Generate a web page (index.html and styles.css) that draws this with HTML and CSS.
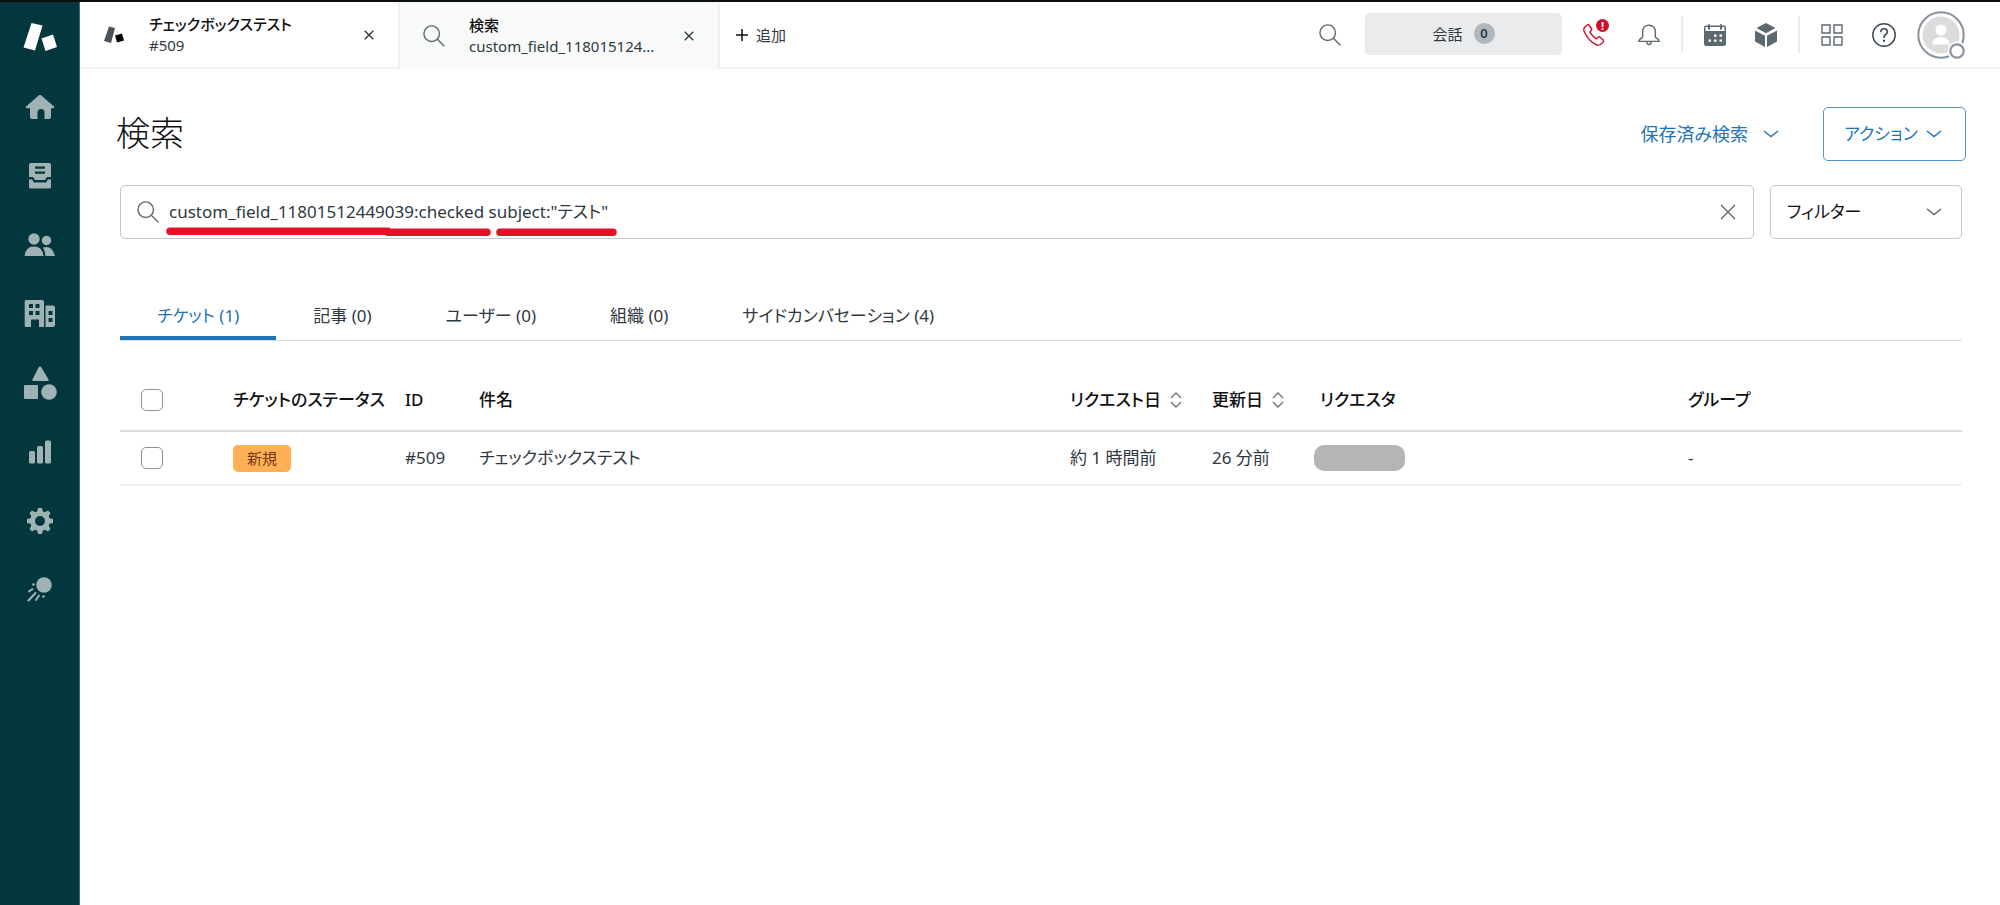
FILE: index.html
```html
<!DOCTYPE html>
<html lang="ja">
<head>
<meta charset="utf-8">
<meta name="viewport" content="width=device-width, initial-scale=1">
<title>検索</title>
<link rel="stylesheet" href="styles.css">
</head>
<body>
<div class="app">
  <nav class="sidebar" aria-label="メイン">
    <a class="side-link side-logo" href="#" aria-label="ホームページ"><svg width="36" height="30" viewBox="0 0 36 30" fill="#fff"><path d="M9.500 1l11 2.500-7.500 25L1.500 25.500zM19.500 16.500l11.500-4 4 12.500-11.500 4z"/></svg></a>
    <a class="side-link" href="#" aria-label="ホーム"><svg width="30" height="26" viewBox="0 0 30 26"><path d="M14 1.200q1-.9 2 0L29 12.500q1 1.500-.6 1.700H26V23q0 2-2 2h-4.500v-6.500a3.500 3.500 0 0 0-7 0V25H7q-2 0-2-2v-8.800H1.600Q0 14 1 12.500z"/></svg></a>
    <a class="side-link" href="#" aria-label="ビュー"><svg width="24" height="26" viewBox="0 0 24 26"><path fill-rule="evenodd" d="M3 0h18q2 0 2 2v12h-4l-2 3H7l-2-3H1V2q0-2 2-2zm4 3.500v2.200h10V3.500zM7 8.500v2.200h10V8.500z"/><path d="M1 16.500h3l2 3h12l2-3h3V24q0 1.500-1.500 1.500h-19Q1 25.500 1 24z"/></svg></a>
    <a class="side-link" href="#" aria-label="顧客"><svg width="32" height="24" viewBox="0 0 32 24"><circle cx="10" cy="6" r="5.700"/><circle cx="22.500" cy="7.500" r="4.700"/><path d="M.5 23q1-9.500 9.500-9.500T19.500 23zM19 14.500q9-3 12 8.500h-9.500q-.3-5-2.500-8.500z"/></svg></a>
    <a class="side-link" href="#" aria-label="組織"><svg width="32" height="28" viewBox="0 0 32 28"><path fill-rule="evenodd" d="M2 0h16q2 0 2 2v25h-5v-6.500q0-1-1-1H8q-1 0-1 1V27H2q-1.300 0-1.300-1.300V1.500Q.7 0 2 0zm3 4v4h4V4zm6.500 0v4h4V4zM5 11v4h4v-4zm6.500 0v4h4v-4zM21.500 5.500H29q2 0 2 2V25q0 2-2 2h-7.500zM24.500 11v4h4v-4zm0 7v4h4v-4z"/></svg></a>
    <a class="side-link" href="#" aria-label="オブジェクト"><svg width="34" height="34" viewBox="0 0 34 34"><path d="M15.500 1.500q1.500-2 3 0l7 12q.7 1.500-1 1.500h-14q-1.700 0-1-1.500z"/><rect x="1" y="19" width="14" height="14" rx="1"/><circle cx="26" cy="26" r="7.800"/></svg></a>
    <a class="side-link" href="#" aria-label="レポート"><svg width="24" height="24" viewBox="0 0 24 24"><rect x="1" y="11" width="6" height="12.500" rx="1.500"/><rect x="9" y="6" width="6" height="17.500" rx="1.500"/><rect x="17" y=".5" width="6" height="23" rx="1.500"/></svg></a>
    <a class="side-link" href="#" aria-label="管理"><svg width="26" height="26" viewBox="0 0 26 26"><path fill-rule="evenodd" d="M11 0h4l.8 3.500 2 .8L21 2.500 23.500 5l-1.800 3.200.8 2 3.500.8v4l-3.500.8-.8 2 1.800 3.200-2.500 2.500-3.200-1.800-2 .8L15 26h-4l-.8-3.500-2-.8L5 23.500 2.500 21l1.800-3.200-.8-2L0 15v-4l3.500-.8.800-2L2.500 5 5 2.500l3.200 1.800 2-.8zM13 8a5 5 0 1 0 0 10 5 5 0 0 0 0-10z"/></svg></a>
    <a class="side-link" href="#" aria-label="アプリ"><svg width="26" height="26" viewBox="0 0 26 26"><circle cx="17" cy="8" r="7.800"/><path d="M1.500 23.500l7-7.500M2 14.500l3.500-2.500M9 23l3-4.500" fill="none" stroke="#9fb3b5" stroke-width="2" stroke-linecap="round"/><circle cx="6.500" cy="7.500" r="1.300"/><circle cx="16.500" cy="19.500" r="1.300"/></svg></a>
  </nav>

  <div class="workspace">
    <header class="topbar">
      <div class="doc-tab">
        <svg class="doc-icon" width="22" height="18" viewBox="0 0 22 18"><path fill="#49545c" d="M6 .5l6 1.500-4 15-7-2z"/><path d="M12 9.500l7-2 2 7-7 2z"/></svg>
        <a class="doc-text" href="#"><span class="doc-title">チェックボックステスト</span><span class="doc-sub">#509</span></a>
        <button class="icon-btn" aria-label="閉じる"><svg width="10" height="10" viewBox="0 0 10 10"><path d="M.7.700l8.600 8.600M9.300.700L.7 9.300" stroke="#2f3941" stroke-width="1.400"/></svg></button>
      </div>
      <div class="doc-tab doc-tab-active">
        <svg class="doc-icon" width="22" height="22" viewBox="0 0 22 22" fill="none" stroke="#5c6970" stroke-width="1.400"><circle cx="8.700" cy="8.700" r="7.800"/><path d="M14.300 14.300l7 7"/></svg>
        <a class="doc-text" href="#"><span class="doc-title">検索</span><span class="doc-sub">custom_field_118015124...</span></a>
        <button class="icon-btn" aria-label="閉じる"><svg width="10" height="10" viewBox="0 0 10 10"><path d="M.7.700l8.600 8.600M9.300.700L.7 9.300" stroke="#2f3941" stroke-width="1.400"/></svg></button>
      </div>
      <button class="add-btn"><svg width="12" height="12" viewBox="0 0 12 12"><path d="M6 0v12M0 6h12" stroke="#111" stroke-width="1.500"/></svg>追加</button>

      <div class="tools">
        <button class="icon-btn" aria-label="検索"><svg width="22" height="22" viewBox="0 0 22 22" fill="none" stroke="#5c6970" stroke-width="1.400"><circle cx="8.700" cy="8.700" r="7.800"/><path d="M14.300 14.300l7 7"/></svg></button>
        <button class="talk-btn">会話<span class="count">0</span></button>
        <div class="tool-group">
          <button class="icon-btn phone-btn" aria-label="通話"><svg width="26" height="22" viewBox="0 0 26 22" fill="none" stroke="#cc0f2c" stroke-width="1.400" stroke-linejoin="round"><path d="M4.200.9L1.600 3.300Q.2 5 1.300 7.700q3.700 8.400 11.200 12.600 3 1.600 4.900.2l2.800-2.600q.8-1 0-2l-3-2.700q-1-.8-2 0l-1.900 1.600Q9 12 6.800 8.200l1.400-1.700q.9-1 .2-2L6.200 1.300q-1-1.100-2-.4z"/></svg><span class="alert">!</span></button>
          <button class="icon-btn" aria-label="通知"><svg width="22" height="22" viewBox="0 0 22 22" fill="none" stroke="#5c6970" stroke-width="1.400"><path d="M11 1.200c-4 0-6.300 2.800-6.300 6.300v4.800q0 1-.8 1.600l-2 1.500q-1 .8-1 2h20.200q0-1.200-1-2l-2-1.500q-.8-.6-.8-1.600V7.500c0-3.500-2.300-6.300-6.300-6.300zM8.700 17.500q0 3 2.300 3t2.300-3"/></svg></button>
        </div>
        <span class="divider"></span>
        <div class="tool-group">
          <button class="icon-btn" aria-label="カレンダー"><svg width="22" height="24" viewBox="0 0 22 24" fill="#5c6970"><path d="M5 1v5M17 1v5" stroke="#5c6970" stroke-width="1.500"/><path fill-rule="evenodd" d="M2 2.500h18q2 0 2 2v16q0 2.500-2.500 2.500h-17Q0 23 0 20.500v-16q0-2 2-2zM1.500 8h19V4H18v2.500h-2V4H6v2.500H4V4H1.500zM10 11.500v2.300h2.500v-2.300zm5.500 0v2.300H18v-2.300zm-11 5v2.300H7v-2.300zm5.500 0v2.300h2.500v-2.300zm5.500 0v2.300H18v-2.300z"/></svg></button>
          <button class="icon-btn" aria-label="アプリ"><svg width="22" height="24" viewBox="0 0 22 24" fill="#5c6970"><path d="M11 0l9.500 5L11 10.200 1.500 5zM0 7.500l10 5.300V24L0 18.500zM22 7.500l-10 5.300V24l10-5.500z"/></svg></button>
        </div>
        <span class="divider"></span>
        <div class="tool-group">
          <button class="icon-btn" aria-label="製品"><svg width="22" height="22" viewBox="0 0 22 22" fill="none" stroke="#5c6970" stroke-width="1.400"><path d="M1 1h8v8H1zM13 1h8v8h-8zM1 13h8v8H1zM13 13h8v8h-8z"/></svg></button>
          <button class="icon-btn" aria-label="ヘルプ"><svg width="24" height="24" viewBox="0 0 24 24" fill="none" stroke="#3c474f" stroke-width="1.400"><circle cx="12" cy="12" r="11.200"/><path d="M8.800 9.200q0-3.500 3.300-3.500t3.300 3q0 1.500-1.700 2.800T12 14.300v.7" stroke-width="1.600"/><path d="M12 16.800v2" stroke-width="2"/></svg></button>
        </div>
        <button class="icon-btn avatar" aria-label="プロフィール"><svg width="48" height="48" viewBox="0 0 48 48"><circle cx="24" cy="24" r="22.700" fill="#fff" stroke="#87929d" stroke-width="2"/><circle cx="24" cy="24" r="18.500" fill="#dcdcdc"/><circle cx="24" cy="19" r="5.500" fill="#fff"/><path d="M15 33.500q1-7.500 9-7.500t9 7.500z" fill="#fff"/><circle cx="40" cy="40" r="9.500" fill="#fff"/><circle cx="40" cy="40" r="6.700" fill="#fff" stroke="#87929d" stroke-width="2.200"/></svg></button>
      </div>
    </header>

    <main class="content">
      <div class="heading-row">
        <h1 class="page-title">検索</h1>
        <button class="link-btn">保存済み検索<svg width="16" height="8" viewBox="0 0 16 8"><path class="chev" d="M1 1l7 5.500L15 1"/></svg></button>
        <button class="action-btn">アクション<svg width="16" height="8" viewBox="0 0 16 8"><path class="chev" d="M1 1l7 5.500L15 1"/></svg></button>
      </div>

      <div class="search-row">
        <div class="search-box">
          <svg width="22" height="22" viewBox="0 0 22 22" fill="none" stroke="#5c6970" stroke-width="1.400"><circle cx="8.700" cy="8.700" r="7.800"/><path d="M14.300 14.300l7 7"/></svg>
          <input class="search-input" type="text" aria-label="検索" value='custom_field_11801512449039:checked subject:"テスト"'>
          <button class="icon-btn" aria-label="クリア"><svg width="16" height="16" viewBox="0 0 16 16"><path d="M1 1l14 14M15 1L1 15" stroke="#5c6970" stroke-width="1.400"/></svg></button>
          <svg class="marks" width="452" height="10" viewBox="0 0 452 10" fill="none" stroke="#e31227" stroke-width="7.500" stroke-linecap="round"><path d="M4 4.300h218M222 5.200h99M334 5.200h113"/></svg>
        </div>
        <button class="filter-btn">フィルター<svg width="16" height="8" viewBox="0 0 16 8"><path class="chev" d="M1 1l7 5.500L15 1"/></svg></button>
      </div>

      <div class="result-tabs" role="tablist">
        <button class="result-tab result-tab-active" role="tab" aria-selected="true">チケット (1)</button>
        <button class="result-tab" role="tab">記事 (0)</button>
        <button class="result-tab" role="tab">ユーザー (0)</button>
        <button class="result-tab" role="tab">組織 (0)</button>
        <button class="result-tab" role="tab">サイドカンバセーション (4)</button>
      </div>

      <table class="results">
        <colgroup><col class="c-check"><col class="c-status"><col class="c-id"><col><col class="c-created"><col class="c-updated"><col class="c-requester"><col class="c-group"></colgroup>
        <thead>
          <tr>
            <th class="check-cell"><input class="check" type="checkbox" aria-label="すべて選択"></th>
            <th>チケットのステータス</th>
            <th>ID</th>
            <th>件名</th>
            <th><button class="sort-btn">リクエスト日<svg width="12" height="16" viewBox="0 0 12 16"><path d="M1 6l5-5 5 5M1 10l5 5 5-5"/></svg></button></th>
            <th><button class="sort-btn">更新日<svg width="12" height="16" viewBox="0 0 12 16"><path d="M1 6l5-5 5 5M1 10l5 5 5-5"/></svg></button></th>
            <th>リクエスタ</th>
            <th>グループ</th>
          </tr>
        </thead>
        <tbody>
          <tr>
            <td class="check-cell"><input class="check" type="checkbox" aria-label="チケット #509 を選択"></td>
            <td><span class="status">新規</span></td>
            <td>#509</td>
            <td>チェックボックステスト</td>
            <td>約 1 時間前</td>
            <td>26 分前</td>
            <td class="requester-cell"><span class="redacted"></span></td>
            <td>-</td>
          </tr>
        </tbody>
      </table>
    </main>
  </div>
</div>
</body>
</html>
```
FILE: styles.css
```css
* { box-sizing: border-box; }

body {
  margin: 0;
  background: #fff;
  color: #2f3941;
  font: 17px/24px "Noto Sans", "Noto Sans CJK JP", sans-serif;
  font-feature-settings: "palt";
}

button, input { font: inherit; color: inherit; font-feature-settings: inherit; }
button { padding: 0; border: 0; background: none; }
a { color: inherit; text-decoration: none; }
svg { display: block; flex: none; }

.app {
  display: flex;
  min-height: 100vh;
  border-top: 2px solid #0b0f0e;
}

/* Sidebar */
.sidebar {
  display: flex;
  flex: none;
  flex-direction: column;
  width: 80px;
  background: #03363d;
  border-right: 1px solid #4a6369;
}
.side-link {
  display: flex;
  align-items: center;
  justify-content: center;
  height: 69px;
  fill: #9fb3b5;
}
.side-logo { height: 70px; }

.workspace { flex: 1; min-width: 0; }

/* Top bar */
.topbar {
  display: flex;
  height: 67px;
  border-bottom: 2px solid #eff0f1;
}
.doc-tab {
  display: flex;
  align-items: center;
  width: 320px;
  padding: 0 24px 0 23px;
  border-right: 2px solid #eff0f1;
}
.doc-icon { margin-right: 24px; }
.doc-tab-active {
  height: 67px;
  background: #f8f9f9;
}
.doc-text {
  display: flex;
  flex: 1;
  flex-direction: column;
  min-width: 0;
  font-size: 15px;
  line-height: 21px;
}
.doc-title { color: #111; font-weight: 500; }
.icon-btn { display: flex; align-items: center; justify-content: center; }
.add-btn {
  display: flex;
  align-items: center;
  gap: 8px;
  padding-left: 16px;
  font-size: 15px;
}
.tools {
  display: flex;
  align-items: center;
  gap: 21px;
  margin-left: auto;
  padding-right: 35px;
}
.talk-btn {
  display: flex;
  align-items: center;
  justify-content: center;
  gap: 11px;
  width: 197px;
  height: 42px;
  margin: 0 0 2px 3px;
  border-radius: 5px;
  background: #e9ebec;
  font-size: 15px;
}
.count {
  width: 21px;
  height: 21px;
  border-radius: 50%;
  background: #b0b8be;
  font-size: 13px;
  font-weight: 600;
  line-height: 21px;
}
.tool-group { display: flex; align-items: center; gap: 29px; }
.phone-btn { position: relative; }
.alert {
  position: absolute;
  top: -5px;
  right: 0;
  width: 13px;
  height: 13px;
  border-radius: 50%;
  background: #cc0f2c;
  color: #fff;
  font-size: 11px;
  font-weight: 700;
  line-height: 13px;
}
.divider { width: 2px; height: 37px; background: #e9ebec; }

/* Page */
.content { padding: 38px 38px 0 40px; }
.heading-row { display: flex; align-items: center; margin-right: -4px; }
.page-title {
  flex: 1;
  margin: 0 0 2px -4px;
  color: #111;
  font-size: 34px;
  font-weight: 300;
  line-height: 48px;
}
.chev { fill: none; stroke: currentColor; stroke-width: 1.4; }
.link-btn, .action-btn { display: flex; align-items: center; color: #1f73b7; }
.link-btn { gap: 15px; margin-right: 44px; font-size: 18px; }
.action-btn {
  justify-content: space-between;
  width: 143px;
  height: 54px;
  padding: 0 23px 0 20px;
  border: 1px solid #5293c7;
  border-radius: 5px;
}
.search-row { display: flex; gap: 16px; margin-top: 24px; }
.search-box, .filter-btn {
  display: flex;
  align-items: center;
  height: 54px;
  border: 1px solid #c2c8cc;
  border-radius: 5px;
}
.search-box {
  position: relative;
  flex: 1;
  padding: 0 17px 0 16px;
}
.search-input {
  flex: 1;
  min-width: 0;
  padding: 0 0 0 10px;
  border: 0;
  outline: 0;
  background: none;
}
.marks { position: absolute; left: 45px; bottom: 1px; }
.filter-btn {
  justify-content: space-between;
  width: 192px;
  padding: 0 19px 0 16px;
  color: #111;
}
.filter-btn svg { color: #5c6970; }

/* Result tabs */
.result-tabs {
  display: flex;
  margin-top: 52px;
  border-bottom: 1px solid #d8dcde;
}
.result-tab { height: 49px; padding: 4px 37px 0; border-bottom: 4px solid transparent; }
.result-tab-active { border-bottom-color: #1f73b7; color: #1f73b7; }

/* Results table */
.results {
  width: 100%;
  margin-top: 30px;
  border-collapse: collapse;
  table-layout: fixed;
  text-align: left;
}
.c-check { width: 113px; }
.c-status { width: 172px; }
.c-id { width: 74px; }
.c-created { width: 142px; }
.c-updated { width: 108px; }
.c-requester { width: 368px; }
.c-group { width: 274px; }
.results th, .results td { padding: 0; white-space: nowrap; }
.results th {
  height: 60px;
  padding-bottom: 2px;
  border-bottom: 2px solid #d8dcde;
  color: #111;
  font-weight: 500;
}
.results td { height: 54px; border-bottom: 2px solid #f1f2f3; }
.results .check-cell { padding-left: 21px; }
.check {
  display: block;
  appearance: none;
  width: 22px;
  height: 22px;
  margin: 0;
  border: 1px solid #87929d;
  border-radius: 5px;
  background: #fff;
}
.sort-btn { display: flex; align-items: center; gap: 9px; font-weight: 500; }
.sort-btn svg { fill: none; stroke: #68737d; stroke-width: 1.4; }
.status {
  display: inline-block;
  height: 27px;
  padding: 0 14px;
  border-radius: 5px;
  background: #ffb057;
  color: #703815;
  font-size: 15px;
  line-height: 27px;
  vertical-align: middle;
}
.redacted {
  display: block;
  width: 91px;
  height: 26px;
  margin-left: -6px;
  border-radius: 10px;
  background: #b5b5b5;
}
```
